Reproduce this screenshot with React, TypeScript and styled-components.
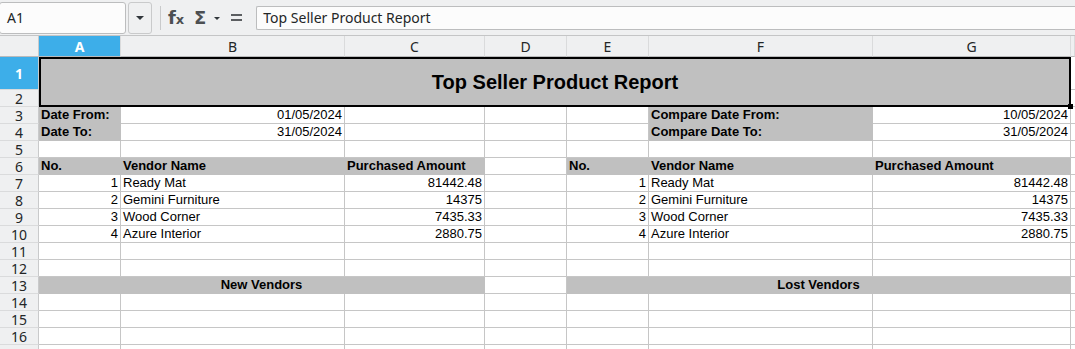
import React from 'react'
import styled, {createGlobalStyle} from 'styled-components'

const GlobalStyle = createGlobalStyle`
  html, body {
    margin: 0;
    padding: 0;
    background: #fff;
  }
  body {
    width: 1075px;
    height: 349px;
    overflow: hidden;
    font-family: "Liberation Sans", Arial, sans-serif;
  }
`

type Align = 'left' | 'right' | 'center'

type CellSpec = {
    col: number
    span?: number
    text?: string
    align?: Align
    bold?: boolean
    fill?: boolean
}

const COLS = ['A', 'B', 'C', 'D', 'E', 'F', 'G']

const Page = styled.div`
  width: 1075px;
  height: 349px;
  overflow: hidden;
  display: flex;
  flex-direction: column;
`

const Toolbar = styled.div`
  height: 36px;
  flex: none;
  box-sizing: border-box;
  display: flex;
  align-items: center;
  background: #eff0f1;
  border-bottom: 1px solid #c4c5c6;
  font-family: "Noto Sans", "Open Sans", sans-serif;
  color: #232627;
`

const NameBox = styled.div`
  width: 127px;
  height: 32px;
  box-sizing: border-box;
  margin-left: -1px;
  padding-left: 7px;
  display: flex;
  align-items: center;
  background: #fcfcfc;
  border: 1px solid #bcbdbe;
  border-radius: 3px;
  font-size: 14px;
`

const DropButton = styled.div`
  width: 24px;
  height: 32px;
  box-sizing: border-box;
  margin-left: 2px;
  display: flex;
  align-items: center;
  justify-content: center;
  border: 1px solid #c9cacb;
  border-radius: 3px;
  background: #eff0f1;
`

const Caret = styled.span<{$small?: boolean}>`
  width: 0;
  height: 0;
  border-left: ${p => (p.$small ? 3 : 4)}px solid transparent;
  border-right: ${p => (p.$small ? 3 : 4)}px solid transparent;
  border-top: ${p => (p.$small ? 3 : 4)}px solid #31363b;
`

const Separator = styled.div`
  width: 1px;
  height: 24px;
  margin: 0 7px 0 8px;
  background: #c9cacb;
`

const FxIcon = styled.span`
  display: flex;
  align-items: baseline;
  width: 18px;
  color: #4d4f52;
  font-family: "DejaVu Sans", sans-serif;
  font-weight: bold;
  b {
    font-size: 18px;
  }
  i {
    font-style: normal;
    font-size: 13px;
    margin-left: 0;
  }
`

const SigmaIcon = styled.span`
  margin-left: 8px;
  color: #4d4f52;
  font-family: "DejaVu Sans", sans-serif;
  font-weight: bold;
  font-size: 18px;
`

const SigmaCaret = styled.span`
  margin: 2px 0 0 8px;
  display: flex;
`

const EqualsIcon = styled.span`
  margin-left: 11px;
  width: 11px;
  display: flex;
  flex-direction: column;
  gap: 3px;
  &::before,
  &::after {
    content: '';
    height: 2px;
    background: #5b5e61;
  }
`

const FormulaInput = styled.div`
  flex: 1;
  height: 24px;
  box-sizing: border-box;
  margin-left: 14px;
  padding-left: 6px;
  display: flex;
  align-items: center;
  background: #fcfcfc;
  border: 1px solid #bcbdbe;
  border-right: none;
  border-radius: 2px 0 0 2px;
  font-size: 14px;
`

const Sheet = styled.div`
  display: grid;
  grid-template-columns: 39px 82px 224px 140px 82px 82px 224px 198px 1fr;
  grid-template-rows: 21px 33px repeat(16, 17px);
`

const Corner = styled.div`
  grid-row: 1;
  grid-column: 1;
  background: #eff0f1;
  border-right: 1px solid #c9cacb;
  border-bottom: 1px solid #b9babb;
`

const ColHeader = styled.div<{$col: number; $active?: boolean}>`
  grid-row: 1;
  grid-column: ${p => p.$col};
  display: flex;
  align-items: center;
  justify-content: center;
  padding-top: 1px;
  background: ${p => (p.$active ? '#3daee9' : '#eff0f1')};
  color: ${p => (p.$active ? '#fff' : '#232627')};
  font-weight: ${p => (p.$active ? 'bold' : 'normal')};
  border-right: 1px solid #dadbdc;
  border-bottom: 1px solid #b9babb;
  font-family: "Noto Sans", "Open Sans", sans-serif;
  font-size: 14px;
`

const RowHeader = styled.div<{$row: number; $active?: boolean}>`
  grid-row: ${p => p.$row};
  grid-column: 1;
  display: flex;
  align-items: center;
  justify-content: center;
  background: ${p => (p.$active ? '#3daee9' : '#eff0f1')};
  color: ${p => (p.$active ? '#fff' : '#232627')};
  font-weight: ${p => (p.$active ? 'bold' : 'normal')};
  border-bottom: 1px solid #dadbdc;
  border-right: 1px solid #c9cacb;
  font-family: "Noto Sans", "Open Sans", sans-serif;
  font-size: 14px;
`

const Cell = styled.div<{$row: number; $col: number; $span: number; $fill?: boolean; $bold?: boolean; $align: Align}>`
  grid-row: ${p => p.$row};
  grid-column: ${p => p.$col} / span ${p => p.$span};
  overflow: hidden;
  white-space: nowrap;
  padding: 0 2px;
  line-height: 16px;
  font-size: 13px;
  color: #000;
  text-align: ${p => p.$align};
  font-weight: ${p => (p.$bold ? 'bold' : 'normal')};
  background: ${p => (p.$fill ? '#c0c0c0' : '#fff')};
  border-right: 1px solid ${p => (p.$fill ? '#c0c0c0' : '#c6c6c6')};
  border-bottom: 1px solid ${p => (p.$fill ? '#c0c0c0' : '#c6c6c6')};
`

const TitleCell = styled.div`
  grid-row: 2 / span 2;
  grid-column: 2 / span 7;
  position: relative;
  box-sizing: border-box;
  display: flex;
  align-items: center;
  justify-content: center;
  background: #c0c0c0;
  border: 2px solid #000;
  font-size: 20px;
  font-weight: bold;
  color: #000;

  &::after {
    content: '';
    position: absolute;
    right: -4px;
    bottom: -4px;
    width: 5px;
    height: 5px;
    background: #000;
  }
`

const Filler = styled.div<{$row: number}>`
  grid-row: ${p => p.$row};
  grid-column: 9;
  border-bottom: 1px solid #c6c6c6;
`

const header = (label: string, amount: string): CellSpec[] => [
    {col: 2, text: label, bold: true, fill: true},
    {col: 3, text: amount, align: 'right'},
]

const vendors = [
    ['1', 'Ready Mat', '81442.48'],
    ['2', 'Gemini Furniture', '14375'],
    ['3', 'Wood Corner', '7435.33'],
    ['4', 'Azure Interior', '2880.75'],
]

const empty = (): CellSpec[] => [2, 3, 4, 5, 6, 7, 8].map(col => ({col}))

// sheet rows 3..17, key = sheet row number
const rows: Record<number, CellSpec[]> = {
    3: [
        ...header('Date From:', '01/05/2024'),
        {col: 4}, {col: 5}, {col: 6},
        {col: 7, text: 'Compare Date From:', bold: true, fill: true},
        {col: 8, text: '10/05/2024', align: 'right'},
    ],
    4: [
        ...header('Date To:', '31/05/2024'),
        {col: 4}, {col: 5}, {col: 6},
        {col: 7, text: 'Compare Date To:', bold: true, fill: true},
        {col: 8, text: '31/05/2024', align: 'right'},
    ],
    5: empty(),
    6: [
        {col: 2, text: 'No.', bold: true, fill: true},
        {col: 3, text: 'Vendor Name', bold: true, fill: true},
        {col: 4, text: 'Purchased Amount', bold: true, fill: true},
        {col: 5},
        {col: 6, text: 'No.', bold: true, fill: true},
        {col: 7, text: 'Vendor Name', bold: true, fill: true},
        {col: 8, text: 'Purchased Amount', bold: true, fill: true},
    ],
    11: empty(),
    12: empty(),
    13: [
        {col: 2, span: 3, text: 'New Vendors', align: 'center', bold: true, fill: true},
        {col: 5},
        {col: 6, span: 3, text: 'Lost Vendors', align: 'center', bold: true, fill: true},
    ],
    14: empty(),
    15: empty(),
    16: empty(),
    17: empty(),
}

vendors.forEach(([no, name, amount], i) => {
    rows[7 + i] = [
        {col: 2, text: no, align: 'right'},
        {col: 3, text: name},
        {col: 4, text: amount, align: 'right'},
        {col: 5},
        {col: 6, text: no, align: 'right'},
        {col: 7, text: name},
        {col: 8, text: amount, align: 'right'},
    ]
})

const App = () => {
    const rowNumbers = Array.from({length: 17}, (_, i) => i + 1)

    return (
        <Page>
            <GlobalStyle/>
            <Toolbar>
                <NameBox>A1</NameBox>
                <DropButton><Caret/></DropButton>
                <Separator/>
                <FxIcon><b>f</b><i>x</i></FxIcon>
                <SigmaIcon>Σ</SigmaIcon>
                <SigmaCaret><Caret $small/></SigmaCaret>
                <EqualsIcon/>
                <FormulaInput>Top Seller Product Report</FormulaInput>
            </Toolbar>
            <Sheet>
                <Corner/>
                {COLS.map((c, i) => (
                    <ColHeader key={c} $col={i + 2} $active={i === 0}>{c}</ColHeader>
                ))}
                <ColHeader $col={9}/>

                {/* row 17 only peeks in at the bottom edge, its label isn't visible */}
                {rowNumbers.map(n => (
                    <RowHeader key={n} $row={n + 1} $active={n === 1}>{n < 17 ? n : null}</RowHeader>
                ))}

                <TitleCell>Top Seller Product Report</TitleCell>
                <Filler $row={2}/>
                <Filler $row={3}/>

                {Object.entries(rows).map(([num, cells]) => {
                    const r = Number(num) + 1
                    return (
                        <React.Fragment key={num}>
                            {cells.map(c => (
                                <Cell
                                    key={c.col}
                                    $row={r}
                                    $col={c.col}
                                    $span={c.span || 1}
                                    $fill={c.fill}
                                    $bold={c.bold}
                                    $align={c.align || 'left'}
                                >
                                    {c.text}
                                </Cell>
                            ))}
                            <Filler $row={r}/>
                        </React.Fragment>
                    )
                })}
            </Sheet>
        </Page>
    )
}

export default App
